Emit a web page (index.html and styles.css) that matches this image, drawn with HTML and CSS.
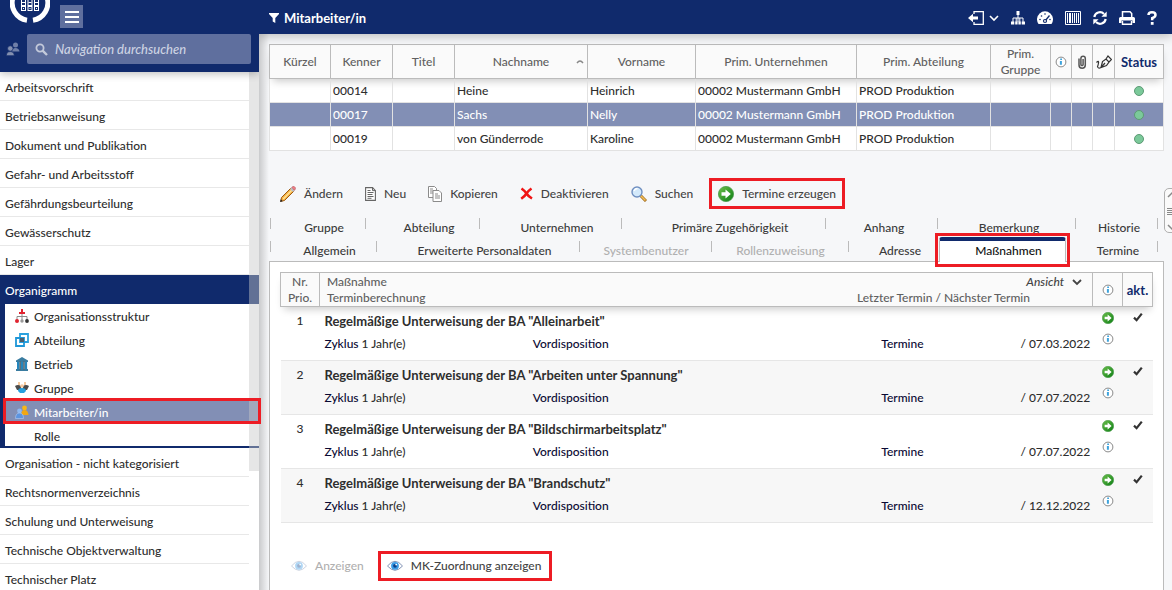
FILE: index.html
```
<!DOCTYPE html>
<html lang="de">
<head>
<meta charset="utf-8">
<title>Mitarbeiter/in</title>
<link rel="stylesheet" href="styles.css">
</head>
<body>
<svg class="defs" aria-hidden="true">
  <defs>
    <linearGradient id="g-green" x1="0" y1="0" x2="1" y2="1"><stop offset="0" stop-color="#6cc04a"/><stop offset="1" stop-color="#0b7d14"/></linearGradient>
    <symbol id="go" viewBox="0 0 16 16"><circle cx="8" cy="8" r="7.6" fill="url(#g-green)" stroke="#4c9a4c" stroke-width=".8"/><path d="M3.5 6.3h4V3.4L12.8 8l-5.3 4.6V9.7h-4z" fill="#fff"/></symbol>
    <symbol id="info" viewBox="0 0 12 12"><circle cx="6" cy="6" r="4.9" fill="#fff" stroke="#8a8a8a"/><path d="M5.2 2.6h1.8v1.5H5.2zM4.9 5h2v3.8h-2z" fill="#3fa3dc"/></symbol>
    <symbol id="check" viewBox="0 0 10 10"><path d="M1 5.6 3.6 8.2 8.8 1.6" fill="none" stroke="#333" stroke-width="2.2"/></symbol>
    <symbol id="eye" viewBox="0 0 16 12"><path d="M.5 6Q8-3.4 15.5 6 8 14.600.5 6z" fill="#fff" stroke="#8292b4"/><circle cx="8" cy="5.8" r="3.9" fill="#3b9be6"/><circle cx="8" cy="5.8" r="1.900" fill="#0c3f86"/><circle cx="9.200" cy="4.600" r=".9" fill="#fff"/></symbol>
    <symbol id="down" viewBox="0 0 10 8"><path d="M1 2l4 4 4-4" fill="none" stroke="currentColor" stroke-width="1.8"/></symbol>
  </defs>
</svg>

<aside class="sidebar">
  <header class="side-head">
    <div class="brand">
      <svg class="logo" viewBox="0 0 40 23" aria-hidden="true"><path d="M17 20.200A17.500 17.500 0 0 1 3.200-3M23 20.200A17.500 17.500 0 0 0 36.800-3" fill="none" stroke="#fff" stroke-width="5"/><g fill="#fff"><path d="M11 0h5v11h-5zM17.500 0h5v11h-5zM24 0h5v11h-5z"/></g><g fill="#102a6c"><path d="M12 0h3v5h-3zM18.500 0h3v5h-3zM25 0h3v5h-3zM12 7h3v3h-3zM18.500 7h3v3h-3zM25 7h3v3h-3z"/></g><g fill="#fff"><path d="M13 8h1v1h-1zM19.500 8h1v1h-1zM26 8h1v1h-1zM12 2h3v1h-3zM18.500 2h3v1h-3zM25 2h3v1h-3z"/></g></svg>
      <button class="burger" type="button" aria-label="Menü"><svg viewBox="0 0 16 14"><path d="M1 2h14M1 7h14M1 12h14" stroke="#fff" stroke-width="2.200"/></svg></button>
    </div>
    <div class="search-row">
      <svg class="people" viewBox="0 0 14 14" aria-hidden="true"><g fill="#6f7fa8"><circle cx="9.500" cy="3" r="2.500"/><path d="M5.500 9.500Q6 6 9.500 6t4 3.500z"/></g><g fill="#8490b0" stroke="#102a6c" stroke-width=".7"><circle cx="4.300" cy="6.500" r="2.700"/><path d="M.3 13.700Q.5 9.600 4.300 9.600t4 4.100z"/></g></svg>
      <label class="search"><svg viewBox="0 0 13 13" aria-hidden="true"><circle cx="5" cy="5" r="3.600" fill="none" stroke="#c3c9da" stroke-width="1.800"/><path d="M7.600 7.600 12 12" stroke="#c3c9da" stroke-width="2.400"/></svg><input type="text" placeholder="Navigation durchsuchen" aria-label="Navigation durchsuchen"></label>
    </div>
  </header>
  <nav class="nav">
    <a class="item" href="#">Arbeitsvorschrift</a>
    <a class="item" href="#">Betriebsanweisung</a>
    <a class="item" href="#">Dokument und Publikation</a>
    <a class="item" href="#">Gefahr- und Arbeitsstoff</a>
    <a class="item" href="#">Gefährdungsbeurteilung</a>
    <a class="item" href="#">Gewässerschutz</a>
    <a class="item" href="#">Lager</a>
    <section class="group">
      <a class="item open" href="#">Organigramm</a>
      <div class="sub">
        <a class="sub-item" href="#"><svg viewBox="0 0 14 14"><path d="M7 4v4M2 11V7.500h10V11M7 8v3" fill="none" stroke="#8b8b8b"/><path d="M6 0h2v3h2v2H4V3h2z" fill="#e02430"/><circle cx="2" cy="12" r="2" fill="#e02430"/><circle cx="7" cy="12" r="1.700" fill="#9a9a9a"/><circle cx="12" cy="12" r="1.900" fill="#333"/></svg>Organisationsstruktur</a>
        <a class="sub-item" href="#"><svg viewBox="0 0 14 14"><path d="M5 1h8v8H5z" fill="none" stroke="#2aa1de" stroke-width="1.800"/><path d="M1 5h8v8H1z" fill="none" stroke="#1f97d8" stroke-width="1.800"/><path d="M5 5h4v4H5z" fill="#4b6070"/></svg>Abteilung</a>
        <a class="sub-item" href="#"><svg viewBox="0 0 14 14"><path d="M7 0l6 3.500V5H1V3.500zM1 12h12v2H1z" fill="#3a7ca0"/><path d="M2 5h2.500v7H2zM5.800 5h2.500v7H5.800zM9.600 5h2.500v7H9.600z" fill="#2486bd"/><path d="M4.400 4.500h1.500v8H4.400zM8.200 4.500h1.500v8H8.200z" fill="#4e6470"/></svg>Betrieb</a>
        <a class="sub-item" href="#"><svg viewBox="0 0 14 14"><path d="M3 1h2v3H3zM9 1h2v3H9z" fill="#f4c89c"/><path d="M0 5q3-2 6 0v4H2zM14 5q-3-2-6 0v4h4z" fill="#4b4b4b"/><path d="M3 10q0-3 4-3t4 3l-2 2H5z" fill="#26a0de"/><circle cx="7" cy="5" r="1.800" fill="#f5c79e"/></svg>Gruppe</a>
        <a class="sub-item current" href="#"><svg viewBox="0 0 14 14"><circle cx="9.500" cy="3" r="2.400" fill="#f7b718"/><path d="M6 10q0-5 3.500-5t4 5z" fill="#f1a714"/><circle cx="4.500" cy="6" r="2.400" fill="#8fb8ef"/><path d="M.5 13.500q0-5.500 4-5.500t4 5.500z" fill="#5c94e0" stroke="#b4cdf4" stroke-width=".6"/></svg>Mitarbeiter/in</a>
        <a class="sub-item" href="#"><svg viewBox="0 0 14 14"></svg>Rolle</a>
      </div>
    </section>
    <a class="item" href="#">Organisation - nicht kategorisiert</a>
    <a class="item" href="#">Rechtsnormenverzeichnis</a>
    <a class="item" href="#">Schulung und Unterweisung</a>
    <a class="item" href="#">Technische Objektverwaltung</a>
    <a class="item" href="#">Technischer Platz</a>
    <span class="thumb"></span>
  </nav>
</aside>

<main class="main">
  <header class="top">
    <svg class="funnel" viewBox="0 0 10 10" aria-hidden="true"><path d="M0 0h10v1L6.300 5v5L3.700 8.500V5L0 1z" fill="#fff"/></svg>
    <h1>Mitarbeiter/in</h1>
    <div class="tools">
      <button type="button" class="exit" aria-label="Abmelden"><svg class="i16" viewBox="0 0 16 14"><path d="M6 3V.7h9.300v12.600H6V11" fill="none" stroke="#fff" stroke-width="1.300"/><path d="M0 7l5-4.300v2.900h5v2.800H5v2.900z" fill="#fff"/></svg><svg class="i10" viewBox="0 0 10 8"><path d="M1 2l4 4 4-4" fill="none" stroke="#fff" stroke-width="1.600"/></svg></button>
      <button type="button" aria-label="Struktur"><svg class="i14" viewBox="0 0 14 14"><path d="M7 3v8M2 11V7h10v4M5.200 7v4M8.800 7v4" fill="none" stroke="#fff"/><path d="M5.500 0h3v4h-3zM0 10.500h3.300v3H0zM4.200 10.500h2.400v3H4.200zM7.400 10.500h2.400v3H7.400zM10.700 10.500H14v3h-3.300z" fill="#fff"/></svg></button>
      <button type="button" aria-label="Cockpit"><svg class="i16" viewBox="0 0 16 14"><path d="M1.500 13A8 8 0 1 1 14.500 13z" fill="#fff"/><g fill="#102a6c"><circle cx="3" cy="8.500" r=".8"/><circle cx="4.500" cy="5" r=".8"/><circle cx="8" cy="3" r=".8"/><circle cx="13" cy="8.500" r=".8"/><circle cx="8" cy="10" r="2.100"/></g><path d="M8 10l4.500-5.500" stroke="#102a6c" stroke-width="1.300"/><circle cx="8" cy="10" r=".9" fill="#fff"/></svg></button>
      <button type="button" aria-label="Barcode"><svg class="i16" viewBox="0 0 16 14"><path d="M.5.500h15v13H.5z" fill="none" stroke="#fff"/><path d="M2 2h1v10H2zM4 2h2v10H4zM7 2h1v10H7zM9 2h1v10H9zM11 2h1v10h-1zM13 2h1v10h-1z" fill="#fff"/></svg></button>
      <button type="button" aria-label="Aktualisieren"><svg class="i14" viewBox="0 0 14 14"><path d="M1.300 6A5.700 5.700 0 0 1 11 3M12.700 8A5.700 5.700 0 0 1 3 11" fill="none" stroke="#fff" stroke-width="2.200"/><path d="M13.700.500v5.300H8.400zM.3 13.500V8.200h5.300z" fill="#fff"/></svg></button>
      <button type="button" aria-label="Drucken"><svg class="i16" viewBox="0 0 16 14"><path d="M3.500 7V.8h7.500l1.700 1.700V7" fill="none" stroke="#fff" stroke-width="1.500"/><path d="M1.500 6h13Q16 6 16 7.500V12h-2.500V9.500h-11V12H0V7.500Q0 6 1.500 6z" fill="#fff"/><path d="M3.500 10v3.200h9V10" fill="none" stroke="#fff" stroke-width="1.400"/></svg></button>
      <button type="button" aria-label="Hilfe"><svg class="i10 tall" viewBox="0 0 10 14"><path d="M1.500 4Q1.500 1.300 5 1.300T8.500 4Q8.500 5.800 5.200 7.200V9.200" fill="none" stroke="#fff" stroke-width="2.500"/><path d="M3.800 11h2.800v2.800H3.800z" fill="#fff"/></svg></button>
    </div>
  </header>

  <div class="content">
    <table class="people-table">
      <colgroup><col class="w61"><col class="w62"><col class="w62"><col class="w133"><col class="w108"><col class="w161"><col><col class="w60"><col class="w21"><col class="w21"><col class="w22"><col class="w49"></colgroup>
      <thead><tr>
        <th>Kürzel</th><th>Kenner</th><th>Titel</th>
        <th class="sorted">Nachname<svg viewBox="0 0 8 6" aria-hidden="true"><path d="M1 4q3-4 6 0" fill="none" stroke="#888" stroke-width="1.400"/></svg></th>
        <th>Vorname</th><th>Prim. Unternehmen</th><th>Prim. Abteilung</th><th>Prim. Gruppe</th>
        <th><svg class="i12"><use href="#info"/></svg></th>
        <th><svg class="clip" viewBox="0 0 10 14"><path d="M2 3.500v6.500a3 3 0 0 0 6.300 0V3.500a2.200 2.200 0 0 0-4.400 0V9.500a1 1 0 0 0 2.200 0V4" fill="none" stroke="#555" stroke-width="1.500"/></svg></th>
        <th><svg class="pen" viewBox="0 0 16 14"><path d="M5 12.500 6.500 6.500 10 4l3 3-2.500 3.500zM5 12.500 9 8M10 4l2-3 3.500 3.500L13 7M.5 7.500Q3 5 2.500 8T1.500 11.500Q2 14 5 12.500" fill="none" stroke="#333" stroke-width="1.200"/></svg></th>
        <th class="strong">Status</th>
      </tr></thead>
      <tbody>
        <tr><td></td><td>00014</td><td></td><td>Heine</td><td>Heinrich</td><td>00002 Mustermann GmbH</td><td>PROD Produktion</td><td></td><td></td><td></td><td></td><td><span class="dot"></span></td></tr>
        <tr class="selected"><td></td><td>00017</td><td></td><td>Sachs</td><td>Nelly</td><td>00002 Mustermann GmbH</td><td>PROD Produktion</td><td></td><td></td><td></td><td></td><td><span class="dot"></span></td></tr>
        <tr><td></td><td>00019</td><td></td><td>von Günderrode</td><td>Karoline</td><td>00002 Mustermann GmbH</td><td>PROD Produktion</td><td></td><td></td><td></td><td></td><td><span class="dot"></span></td></tr>
      </tbody>
    </table>

    <div class="toolbar">
      <button type="button"><svg class="i16s" viewBox="0 0 16 16"><path d="M1.500 11.500 11 2l3 3-9.500 9.500L.8 15.300z" fill="#f5b041" stroke="#9c5a12"/><path d="M3.200 13 12 4" stroke="#ffe39a" stroke-width="1.300"/><path d="M10 3l3 3 1.500-1.500-3-3z" fill="#b9bcc4"/><path d="M11.700 1.300 13 .5q1.500-.3 2.200 1T14.800 4l-.4.400z" fill="#ef7f86" stroke="#b0565d" stroke-width=".6"/><path d="M0 16l.8-2.700 1.900 1.900z" fill="#222"/></svg>Ändern</button>
      <button type="button"><svg class="i11" viewBox="0 0 11 14"><path d="M.6.600h7l2.800 3v9.800H.6z" fill="#fff" stroke="#666" stroke-width="1.100"/><path d="M7.500.600v3h3M2.500 3.500h3M2.500 5.500h6M2.500 7.500h5M2.500 9.500h6M2.500 11.300h4" stroke="#666" fill="none"/></svg>Neu</button>
      <button type="button"><svg class="i14s" viewBox="0 0 14 16"><path d="M.5.500h6l2 2v9h-8zM2 3h3M2 5h4M2 7h4" fill="#fff" stroke="#8b8b8b"/><path d="M5 4.500h6l2.500 2.500v8.500H5zM7 8h3M7 10h5M7 12h5" fill="#fff" stroke="#8b8b8b"/></svg>Kopieren</button>
      <button type="button"><svg class="i13" viewBox="0 0 13 13"><path d="M1.500 1.500Q5 4 6.500 6.500T12 11.500M11.500 1.500Q8 4 6.500 6.500T1.200 11.800" fill="none" stroke="#f01414" stroke-width="2.500"/></svg>Deaktivieren</button>
      <button type="button"><svg class="i16s" viewBox="0 0 16 16"><path d="M9.500 9.500 15 15" stroke="#9a6516" stroke-width="3"/><path d="M9.500 9.500 14.500 14.500" stroke="#f2bd55" stroke-width="1.700"/><circle cx="6" cy="6" r="5" fill="#d3e9fb" stroke="#6f8fc0" stroke-width="1.400"/><path d="M3 5q1-2.500 3.500-2.500" fill="none" stroke="#fff" stroke-width="1.400"/></svg>Suchen</button>
      <button type="button" class="marked"><svg class="i16s"><use href="#go"/></svg>Termine erzeugen</button>
    </div>

    <div class="tabs">
      <div class="tab-row first">
        <button type="button">Gruppe</button><button type="button">Abteilung</button><button type="button">Unternehmen</button><button type="button">Primäre Zugehörigkeit</button><button type="button" class="tight">Anhang</button><button type="button" class="tight">Bemerkung</button><button type="button" class="tight">Historie</button>
      </div>
      <div class="tab-row second">
        <button type="button">Allgemein</button><button type="button">Erweiterte Personaldaten</button><button type="button" disabled>Systembenutzer</button><button type="button" disabled>Rollenzuweisung</button><button type="button" class="no-line">Adresse</button><button type="button" class="active">Maßnahmen</button><button type="button">Termine</button>
      </div>
    </div>

    <section class="panel">
      <table class="measures">
        <colgroup><col class="w39"><col><col class="w30"><col class="w30"></colgroup>
        <thead><tr>
          <th>Nr.<br>Prio.</th>
          <th class="wide"><div class="head-grid"><span>Maßnahme<br>Terminberechnung</span><span class="right"><button type="button" class="view">Ansicht <svg class="i10"><use href="#down"/></svg></button><span>Letzter Termin / Nächster Termin</span></span></div></th>
          <th><svg class="i12"><use href="#info"/></svg></th>
          <th class="strong">akt.</th>
        </tr></thead>
        <tbody>
          <tr><td class="nr">1</td><td><h2>Regelmäßige Unterweisung der BA "Alleinarbeit"</h2><div class="line"><span><b>Zyklus</b> 1 Jahr(e)</span><b>Vordisposition</b><b>Termine</b><span>/ 07.03.2022</span></div></td><td class="icons"><svg class="i12"><use href="#go"/></svg><svg class="i12"><use href="#info"/></svg></td><td class="icons"><svg class="i10c"><use href="#check"/></svg></td></tr>
          <tr><td class="nr">2</td><td><h2>Regelmäßige Unterweisung der BA "Arbeiten unter Spannung"</h2><div class="line"><span><b>Zyklus</b> 1 Jahr(e)</span><b>Vordisposition</b><b>Termine</b><span>/ 07.07.2022</span></div></td><td class="icons"><svg class="i12"><use href="#go"/></svg><svg class="i12"><use href="#info"/></svg></td><td class="icons"><svg class="i10c"><use href="#check"/></svg></td></tr>
          <tr><td class="nr">3</td><td><h2>Regelmäßige Unterweisung der BA "Bildschirmarbeitsplatz"</h2><div class="line"><span><b>Zyklus</b> 1 Jahr(e)</span><b>Vordisposition</b><b>Termine</b><span>/ 07.07.2022</span></div></td><td class="icons"><svg class="i12"><use href="#go"/></svg><svg class="i12"><use href="#info"/></svg></td><td class="icons"><svg class="i10c"><use href="#check"/></svg></td></tr>
          <tr><td class="nr">4</td><td><h2>Regelmäßige Unterweisung der BA "Brandschutz"</h2><div class="line"><span><b>Zyklus</b> 1 Jahr(e)</span><b>Vordisposition</b><b>Termine</b><span>/ 12.12.2022</span></div></td><td class="icons"><svg class="i12"><use href="#go"/></svg><svg class="i12"><use href="#info"/></svg></td><td class="icons"><svg class="i10c"><use href="#check"/></svg></td></tr>
        </tbody>
      </table>
      <div class="actions">
        <button type="button" disabled><svg class="eye"><use href="#eye"/></svg>Anzeigen</button>
        <button type="button" class="marked"><svg class="eye"><use href="#eye"/></svg>MK-Zuordnung anzeigen</button>
      </div>
    </section>
  </div>
  <button type="button" class="grip" aria-label="Bereich verschieben"><svg viewBox="0 0 12 40"><path d="M2 6l4-4 4 4M2 34l4 4 4-4" fill="none" stroke="#888" stroke-width="1.500"/><path d="M1 17.500h10M1 19.500h10M1 21.500h10M1 23.500h10" stroke="#888"/></svg></button>
</main>
</body>
</html>
```
FILE: styles.css
```
* { box-sizing: border-box; }
:root { --navy: #102a6c; --select: #828fb5; --line: #bbb; --text: #2e2e2e; --mark: #ed1c24; }
body {
  margin: 0; height: 100vh; overflow: hidden; display: flex;
  font: 500 12px/16px Lato, "Noto Sans", sans-serif; color: var(--text); background: #f6f7f9;
}
button, input { font: inherit; color: inherit; background: none; border: 0; padding: 0; margin: 0; }
a { color: inherit; text-decoration: none; }
svg { display: block; flex: none; }
h1, h2 { margin: 0; font-size: 13px; line-height: 16px; }
.defs { position: absolute; width: 0; height: 0; }

.i10 { width: 10px; height: 8px; }
.i10c { width: 10px; height: 10px; }
.i10.tall { height: 14px; }
.i11 { width: 11px; height: 14px; }
.i12 { width: 12px; height: 12px; }
.i13 { width: 13px; height: 13px; }
.i14 { width: 14px; height: 14px; }
.i14s { width: 14px; height: 16px; }
.i16 { width: 16px; height: 14px; }
.i16s { width: 16px; height: 16px; }

/* Sidebar */
.sidebar { flex: 0 0 259px; display: flex; flex-direction: column; background: #fff; position: relative; z-index: 3; }
.sidebar::after { content: ""; position: absolute; left: 100%; top: 34px; bottom: 0; width: 10px; background: linear-gradient(to right, rgba(0, 0, 0, .18), transparent); }
.side-head { flex: none; background: var(--navy); height: 72px; position: relative; z-index: 2; box-shadow: 0 2px 8px rgba(0, 0, 0, .25); clip-path: inset(0 0 -10px 0); }
.brand { display: flex; align-items: flex-start; gap: 10px; height: 34px; padding-left: 10px; }
.logo { width: 40px; height: 23px; }
.burger { width: 23px; height: 23px; margin-top: 5px; background: #5f6f9e; display: grid; place-items: center; }
.burger svg { width: 16px; height: 14px; }
.search-row { display: flex; align-items: center; gap: 7px; padding: 0 8px 0 6px; }
.people { width: 14px; height: 14px; }
.search { flex: 1; display: flex; align-items: center; gap: 7px; height: 30px; padding: 0 8px; background: #5f6f9e; border-radius: 2px; }
.search svg { width: 13px; height: 13px; }
.search input { flex: 1; min-width: 0; font-size: 13px; font-style: italic; outline: 0; }
.search input::placeholder { color: #cdd3e3; opacity: 1; }
.nav { flex: 1; min-height: 0; position: relative; }
.item { display: flex; align-items: center; height: 29px; margin-right: 10px; padding: 3px 5px 0; border-bottom: 1px solid #e8e8e8; }
.group { background: var(--navy); padding-bottom: 2px; }
.item.open { color: #fff; border-color: transparent; }
.sub { margin-left: 5px; background: #fff; }
.sub-item { display: flex; align-items: center; gap: 5px; height: 24px; padding: 2px 0 0 10px; }
.sub-item svg { width: 14px; height: 14px; margin-bottom: 2px; }
.sub-item:last-child { height: 22px; padding-top: 4px; }
.sub-item.current { position: relative; background: var(--select); color: #fff; }
.sub-item.current::after { content: ""; position: absolute; z-index: 3; inset: -2px -2px 0; border: 3px solid var(--mark); }
.thumb { position: absolute; right: 0; top: 0; width: 10px; height: 399px; background: rgba(200, 200, 200, .45); }

/* Header */
.main { flex: 1; min-width: 0; display: flex; flex-direction: column; position: relative; }
.top { flex: none; height: 34px; display: flex; align-items: center; gap: 5px; padding: 2px 15px 0 10px; background: var(--navy); color: #fff; box-shadow: 0 2px 10px rgba(0, 0, 0, .25); position: relative; z-index: 2; }
.funnel { width: 10px; height: 10px; }
.tools { margin-left: auto; display: flex; align-items: center; gap: 12px; }
.tools .exit { display: flex; align-items: center; gap: 5px; }
.content { flex: 1; display: flex; flex-direction: column; padding: 10px 8px 2px 10px; }

/* Employee table */
table { width: 100%; table-layout: fixed; border-collapse: collapse; background: #fff; }
th { height: 34px; padding: 0; border: 1px solid var(--line); background: #fafafa; color: #606060; font-weight: 500; }
th svg { margin: auto; }
th.strong { color: var(--navy); font-size: 13px; font-weight: 700; }
thead { box-shadow: 0 5px 8px -3px rgba(0, 0, 0, .22); }
.people-table td { height: 24px; padding: 0 2px; border: 1px solid #e2e2e2; white-space: nowrap; overflow: hidden; }
.people-table .selected td { background: var(--select); color: #fff; }
.sorted { position: relative; }
.sorted svg { position: absolute; right: 3px; top: 14px; width: 8px; height: 6px; }
.dot { display: block; width: 10px; height: 10px; margin: auto; border: 1px solid #5c9a74; border-radius: 50%; background: #7bc99a; }
.clip { width: 10px; height: 14px; }
.pen { width: 16px; height: 14px; }
.w21 { width: 21px; } .w22 { width: 22px; } .w30 { width: 30px; } .w39 { width: 39px; }
.w49 { width: 49px; } .w60 { width: 60px; } .w61 { width: 61px; } .w62 { width: 62px; }
.w108 { width: 108px; } .w133 { width: 133px; } .w161 { width: 161px; }

/* Toolbar */
.toolbar { display: flex; align-items: center; gap: 22px; margin-top: 27px; padding-left: 11px; color: #444; }
.toolbar button, .actions button { display: flex; align-items: center; gap: 8px; white-space: nowrap; }
.toolbar .marked { height: 31px; padding: 0 6px; margin-left: -6px; border: 3px solid var(--mark); }

/* Tabs */
.tabs { margin-top: 6px; padding-right: 6px; color: #3a3a3a; }
.tab-row { display: grid; height: 23px; position: relative; margin-left: 1px; }
.tab-row.first { grid-template-columns: 96fr 114fr 142fr 204fr 112fr 138fr 82fr; }
.tab-row.second { grid-template-columns: 107fr 203fr 132fr 137fr 90fr 127fr 92fr; }
.tab-row button { position: relative; padding: 2px 0 0 12px; white-space: nowrap; }
.tab-row .tight { padding-left: 4px; }
.tab-row button:not(.active):not(.no-line)::after, .tab-row::before { content: ""; position: absolute; right: 0; top: 3px; width: 1px; height: 11px; background: var(--line); }
.tab-row::before { right: auto; left: 0; }
.tab-row button:disabled { padding-left: 0; color: #b0b0b0; }
.tab-row .active { z-index: 1; color: #111; background: #fff; border: 1px solid var(--line); border-width: 0 1px; border-top: 4px solid var(--navy); border-radius: 3px 3px 0 0; margin-bottom: -1px; height: 25px; margin-top: -1px; padding-top: 0; padding-bottom: 2px; }
.tab-row .active::after { content: ""; position: absolute; inset: -8px -5px -5px; border: 3px solid var(--mark); }

/* Measures */
.panel { flex: 1; background: #fff; border: 1px solid var(--line); padding: 10px; }
.wide { text-align: left; }
.head-grid { display: flex; justify-content: space-between; padding: 0 8px 0 7px; }
.right { display: flex; flex-direction: column; align-items: flex-start; padding-right: 2px; }
.view { align-self: flex-end; display: flex; align-items: center; gap: 8px; font-style: italic; color: #444; }
.right > span { padding-right: 52px; }
.measures td { height: 54px; padding: 6px 0 0 5px; border-bottom: 1px solid #e6e6e6; vertical-align: top; }
.measures tbody tr:nth-child(even) { background: #f7f7f7; }
.measures .nr { text-align: center; padding-left: 0; }
.line { display: grid; grid-template-columns: 208fr 348fr 139fr 72fr; margin-top: 7px; white-space: nowrap; }
.line b { color: #0a0a33; font-weight: 500; }
.measures .icons { padding: 5px 0 0; }
.icons svg { margin: 0 auto 9px; }
.actions { display: flex; align-items: center; gap: 14px; margin-top: 28px; padding-left: 11px; color: #444; }
.actions button:disabled { color: #b0b0b0; }
.actions button:disabled svg { opacity: .4; }
.actions .marked { height: 30px; padding: 0 8px 0 6px; border: 3px solid var(--mark); }
.eye { width: 16px; height: 12px; }

.grip { position: absolute; right: -8px; top: 188px; width: 16px; height: 45px; display: grid; place-items: center; border: 1px solid #b0b0b0; border-radius: 5px; background: #fafafa; }
.grip svg { width: 12px; height: 40px; }
```
